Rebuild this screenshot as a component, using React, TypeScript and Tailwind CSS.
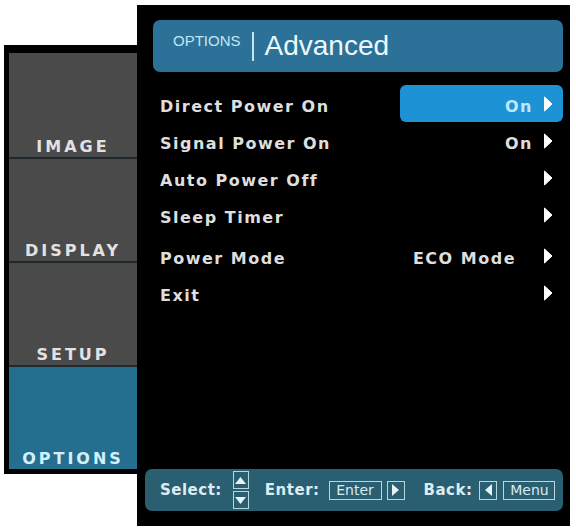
import React from "react";

const rows: { label: string; value?: string; active?: boolean }[] = [
  { label: "Direct Power On", value: "On", active: true },
  { label: "Signal Power On", value: "On" },
  { label: "Auto Power Off" },
  { label: "Sleep Timer" },
  { label: "Power Mode", value: "ECO Mode" },
  { label: "Exit" },
];

const tabs = ["IMAGE", "DISPLAY", "SETUP", "OPTIONS"];

function Arrow({ className = "" }: { className?: string }) {
  return (
    <svg width="10" height="16" viewBox="0 0 10 16" className={className}>
      <path d="M1.5 1 L9 8 L1.5 15 Z" fill="currentColor" stroke="currentColor" strokeLinejoin="round" />
    </svg>
  );
}

function KeyBox({ children, className = "" }: { children: React.ReactNode; className?: string }) {
  return (
    <span
      className={`flex h-[19px] items-center justify-center border border-[#b9d6df] text-[14px] leading-none text-[#d6ecf2] ${className}`}
    >
      {children}
    </span>
  );
}

export default function App() {
  return (
    <div className="flex h-[528px] w-[576px] items-start bg-white font-['DejaVu_Sans',sans-serif]">
      {/* side tabs */}
      <div className="ml-[4px] mt-[45px] w-[133px] border-[5px] border-r-0 border-black bg-black pt-[3px]">
        {tabs.map((t, i) => {
          const on = t === "OPTIONS";
          return (
            <div
              key={t}
              className={`flex h-[104px] items-end justify-center pb-[0px] ${
                i > 0 ? "border-t-2 border-[#1f2a30]" : ""
              } ${on ? "bg-[#246e90] text-[#d4f0fa]" : "bg-[#4a4a4a] text-[#e2e2e2]"}`}
            >
              <span className="text-[16px] font-bold leading-[20px] tracking-[3px]">{t}</span>
            </div>
          );
        })}
      </div>

      {/* main panel */}
      <div className="mt-[5px] flex h-[521px] w-[433px] flex-col bg-black pl-[16px] pr-[7px] pt-[15px]">
        <div className="flex h-[52px] items-center rounded-[7px] bg-[#2c7197] pl-[20px]">
          <span className="-mt-[9px] font-['Liberation_Sans',sans-serif] text-[15px] text-[#c4e6f2]">
            OPTIONS
          </span>
          <span className="mx-[11px] h-[29px] w-[2px] bg-[#c4e6f2]" />
          <span className="font-['Liberation_Sans',sans-serif] text-[28px] text-[#eef8fb]">Advanced</span>
        </div>

        <div className="mt-[13px] flex flex-col">
          {rows.map((r, i) => (
            <div key={r.label} className={`flex h-[37px] items-center ${i === 4 ? "mt-[4px]" : ""}`}>
              <span className="mt-[6px] w-[247px] pl-[7px] text-[16px] font-bold tracking-[1.5px] text-[#dedede]">
                {r.label}
              </span>
              <div
                className={`flex h-[37px] flex-1 items-center justify-end rounded-[6px] pr-[10px] ${
                  r.active ? "bg-[#1d93d6]" : ""
                }`}
              >
                {r.value && (
                  <span
                    className={`mt-[6px] text-[16px] font-bold tracking-[1.5px] ${
                      r.active ? "text-[#bfe6fb]" : "text-[#dedede]"
                    } ${r.value === "ECO Mode" ? "mr-[27px]" : "mr-[10px]"}`}
                  >
                    {r.value}
                  </span>
                )}
                <Arrow className="text-white" />
              </div>
            </div>
          ))}
        </div>

        <div className="mt-auto mb-[15px] -ml-[8px] flex h-[42px] items-center rounded-[7px] bg-[#2a5e71] pl-[15px] text-[#dcecf1]">
          <span className="text-[15px] font-bold tracking-[0.5px]">Select:</span>
          <span className="ml-[11px] flex flex-col gap-[2px]">
            <span className="flex h-[18px] w-[16px] items-center justify-center border border-[#b9d6df]">
              <svg width="11" height="7" viewBox="0 0 11 7">
                <path d="M0 7 L5.5 0 L11 7 Z" fill="#e6f2f5" />
              </svg>
            </span>
            <span className="flex h-[18px] w-[16px] items-center justify-center border border-[#b9d6df]">
              <svg width="11" height="7" viewBox="0 0 11 7">
                <path d="M0 0 L5.5 7 L11 0 Z" fill="#e6f2f5" />
              </svg>
            </span>
          </span>
          <span className="ml-[16px] text-[15px] font-bold tracking-[0.5px]">Enter:</span>
          <KeyBox className="ml-[9px] w-[53px]">Enter</KeyBox>
          <KeyBox className="ml-[5px] w-[18px]">
            <svg width="7" height="12" viewBox="0 0 7 12">
              <path d="M0 0 L7 6 L0 12 Z" fill="#e6f2f5" />
            </svg>
          </KeyBox>
          <span className="ml-[19px] text-[15px] font-bold tracking-[0.5px]">Back:</span>
          <KeyBox className="ml-[7px] w-[18px]">
            <svg width="7" height="12" viewBox="0 0 7 12">
              <path d="M7 0 L0 6 L7 12 Z" fill="#e6f2f5" />
            </svg>
          </KeyBox>
          <KeyBox className="ml-[6px] w-[52px]">Menu</KeyBox>
        </div>
      </div>
    </div>
  );
}
